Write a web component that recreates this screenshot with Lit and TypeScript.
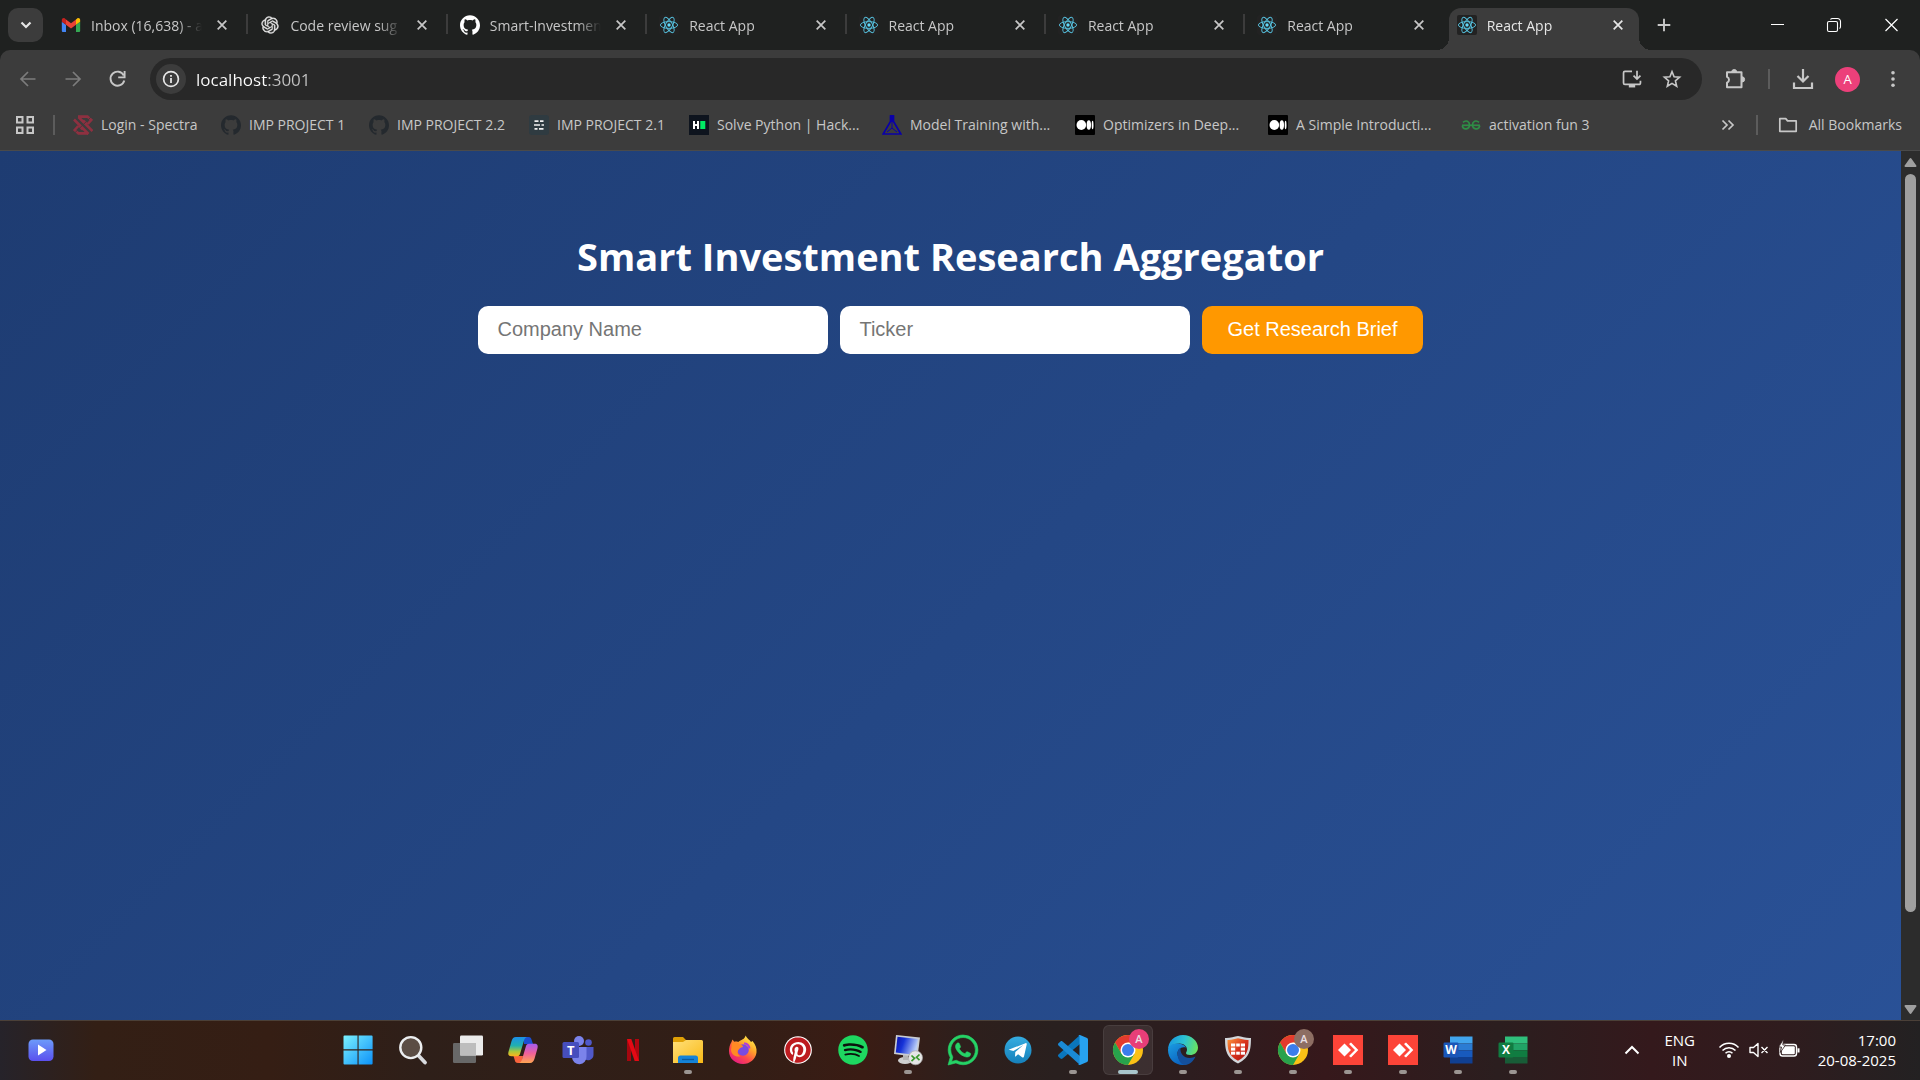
import { LitElement, html, css, TemplateResult } from "lit";
import { customElement, state } from "lit/decorators.js";
import { classMap } from "lit/directives/class-map.js";

/* ---------- Favicons ---------- */

const OCTOCAT =
  "M12 .297c-6.63 0-12 5.373-12 12 0 5.303 3.438 9.8 8.205 11.385.6.113.82-.258.82-.577 0-.285-.01-1.04-.015-2.04-3.338.724-4.042-1.61-4.042-1.61C4.422 18.07 3.633 17.7 3.633 17.7c-1.087-.744.084-.729.084-.729 1.205.084 1.838 1.236 1.838 1.236 1.07 1.835 2.809 1.305 3.495.998.108-.776.417-1.305.76-1.605-2.665-.3-5.466-1.332-5.466-5.93 0-1.31.465-2.38 1.235-3.22-.135-.303-.54-1.523.105-3.176 0 0 1.005-.322 3.3 1.23.96-.267 1.98-.399 3-.405 1.02.006 2.04.138 3 .405 2.28-1.552 3.285-1.23 3.285-1.23.645 1.653.24 2.873.12 3.176.765.84 1.23 1.91 1.23 3.22 0 4.61-2.805 5.625-5.475 5.92.42.36.81 1.096.81 2.22 0 1.606-.015 2.896-.015 3.286 0 .315.21.69.825.57C20.565 22.092 24 17.592 24 12.297c0-6.627-5.373-12-12-12";

const gmailIcon = () => html`<svg viewBox="48 27 96 96" aria-hidden="true">
  <path fill="#4285f4" d="M58 108h14V74L52 59v43c0 3.32 2.69 6 6 6" />
  <path fill="#34a853" d="M120 108h14c3.32 0 6-2.69 6-6V59l-20 15" />
  <path fill="#fbbc04" d="M120 48v26l20-15v-8c0-7.42-8.47-11.65-14.4-7.2" />
  <path fill="#ea4335" d="M72 74V48l24 18 24-18v26L96 92" />
  <path fill="#c5221f" d="M52 51v8l20 15V48l-5.6-4.2c-5.94-4.45-14.4-.22-14.4 7.2" />
</svg>`;

const openaiIcon = () => html`<svg viewBox="-2 -2 28 28" aria-hidden="true">
  <path
    fill="#e6e6e6"
    stroke="#e6e6e6"
    stroke-width=".5"
    d="M22.2819 9.8211a5.9847 5.9847 0 0 0-.5157-4.9108 6.0462 6.0462 0 0 0-6.5098-2.9A6.0651 6.0651 0 0 0 4.9807 4.1818a5.9847 5.9847 0 0 0-3.9977 2.9 6.0462 6.0462 0 0 0 .7427 7.0966 5.98 5.98 0 0 0 .511 4.9107 6.051 6.051 0 0 0 6.5146 2.9001A5.9847 5.9847 0 0 0 13.2599 24a6.0557 6.0557 0 0 0 5.7718-4.2058 5.9894 5.9894 0 0 0 3.9977-2.9001 6.0557 6.0557 0 0 0-.7475-7.0729zm-9.022 12.6081a4.4755 4.4755 0 0 1-2.8764-1.0408l.1419-.0804 4.7783-2.7582a.7948.7948 0 0 0 .3927-.6813v-6.7369l2.02 1.1686a.071.071 0 0 1 .038.052v5.5826a4.504 4.504 0 0 1-4.4945 4.4944zm-9.6607-4.1254a4.4708 4.4708 0 0 1-.5346-3.0137l.142.0852 4.783 2.7582a.7712.7712 0 0 0 .7806 0l5.8428-3.3685v2.3324a.0804.0804 0 0 1-.0332.0615L9.74 19.9502a4.4992 4.4992 0 0 1-6.1408-1.6464zM2.3408 7.8956a4.485 4.485 0 0 1 2.3655-1.9728V11.6a.7664.7664 0 0 0 .3879.6765l5.8144 3.3543-2.0201 1.1685a.0757.0757 0 0 1-.071 0l-4.8303-2.7865A4.504 4.504 0 0 1 2.3408 7.872zm16.5963 3.8558L13.1038 8.364 15.1192 7.2a.0757.0757 0 0 1 .071 0l4.8303 2.7913a4.4944 4.4944 0 0 1-.6765 8.1042v-5.6772a.79.79 0 0 0-.407-.667zm2.0107-3.0231l-.142-.0852-4.7735-2.7818a.7759.7759 0 0 0-.7854 0L9.409 9.2297V6.8974a.0662.0662 0 0 1 .0284-.0615l4.8303-2.7866a4.4992 4.4992 0 0 1 6.6802 4.66zM8.3065 12.863l-2.02-1.1638a.0804.0804 0 0 1-.038-.0567V6.0742a4.4992 4.4992 0 0 1 7.3757-3.4537l-.142.0805L8.704 5.459a.7948.7948 0 0 0-.3927.6813zm1.0976-2.3654l2.602-1.4998 2.6069 1.4998v2.9994l-2.5974 1.4997-2.6067-1.4997Z"
  />
</svg>`;

const githubIcon = (fill: string) => html`<svg viewBox="0 0 24 24" aria-hidden="true">
  <path fill=${fill} d=${OCTOCAT} />
</svg>`;

const reactIcon = () => html`<svg viewBox="0 0 20 20" aria-hidden="true">
  <rect width="20" height="20" rx="2" fill="#222222" />
  <circle cx="10" cy="10" r="1.7" fill="#61dafb" />
  <g fill="none" stroke="#56c1de" stroke-width=".95">
    <ellipse cx="10" cy="10" rx="8.6" ry="3.4" />
    <ellipse cx="10" cy="10" rx="8.6" ry="3.4" transform="rotate(60 10 10)" />
    <ellipse cx="10" cy="10" rx="8.6" ry="3.4" transform="rotate(120 10 10)" />
  </g>
</svg>`;

const spectraIcon = () => html`<svg viewBox="0 0 20 20" aria-hidden="true">
  <g fill="none" stroke="#8e3040" stroke-width="2.6">
    <path d="M5 1.600h9.500L18.300 5l-3.600 4" />
    <path d="M1 4.500 15.500 19M5.500 2 19.500 16" />
    <path d="M15 18.400H5.500L1.700 15l3.600-4" />
    <path d="M10 5.500 14 9.500M6 10.500l4 4" />
  </g>
  <path stroke="#3c3c3c" stroke-width=".9" d="M1 18.600 19 1" />
</svg>`;

const sheetIcon = () => html`<svg viewBox="0 0 20 20" aria-hidden="true">
  <rect width="20" height="20" rx="3" fill="#2f3b41" />
  <path stroke="#f0f0f0" stroke-width="1.7" d="M5.5 6.2h4M11 6.2h3.5M5 10h6M12.500 10H15M5.500 13.800h3M10 13.800h4.500" />
</svg>`;

const hackerRankIcon = () => html`<svg viewBox="0 0 20 20" aria-hidden="true">
  <rect width="20" height="20" fill="#0e141e" />
  <path stroke="#fff" stroke-width="2" d="M5 6v8M9 6v8M5 10h4" />
  <rect x="11.300" y="6" width="5" height="8" fill="#00ea64" />
</svg>`;

const flaskIcon = () => html`<svg viewBox="0 0 20 20" aria-hidden="true">
  <path fill="none" stroke="#0a00a8" stroke-width="1.700" d="M8.500 1v5.500L1.200 19h17.600L11.500 6.500V1z" />
  <path fill="#0a00a8" d="M8 0h4v7H8z" />
  <path fill="none" stroke="#0a00a8" stroke-width="1" d="M10 7v6M10 13l-5 4M10 13l5 4" />
</svg>`;

const mediumIcon = () => html`<svg viewBox="0 0 20 20" aria-hidden="true">
  <rect width="20" height="20" rx="1" fill="#000" />
  <ellipse cx="6.300" cy="10" rx="4.800" ry="5" fill="#fff" />
  <ellipse cx="13.800" cy="10" rx="2.200" ry="4.700" fill="#fff" />
  <ellipse cx="17.600" cy="10" rx=".9" ry="4.300" fill="#fff" />
</svg>`;

const geeksIcon = () => html`<svg viewBox="0 0 20 20" aria-hidden="true">
  <g fill="none" stroke="#2f8d46" stroke-width="1.700">
    <path d="M1 10.300h18" />
    <path d="M2 7.300c3-2.600 6.500-1 6.500 2.500 0 5-6.500 5.400-7.200.8" />
    <path d="M18 7.300c-3-2.600-6.500-1-6.500 2.500 0 5 6.500 5.400 7.200.8" />
  </g>
</svg>`;

/* ---------- Browser chrome glyphs ---------- */

const stroke = (d: string, box = "0 0 20 20", width = "2") => html`<svg viewBox=${box} aria-hidden="true">
  <path d=${d} fill="none" stroke="currentColor" stroke-width=${width} />
</svg>`;

const chevronDown = () => stroke("M5.500 7.500 10 12l4.500-4.500", "0 0 20 20", "2.200");
const closeIcon = () => stroke("M5.200 5.200l9.600 9.600M14.800 5.200l-9.600 9.600", "0 0 20 20", "1.900");
const plusIcon = () => stroke("M10 3.700v12.600M3.700 10h12.600", "0 0 20 20", "1.900");
const backIcon = () => stroke("M17.500 10H3.500M10 3 3 10l7 7", "0 0 20 20", "1.700");
const forwardIcon = () => stroke("M2.500 10h14M10 3l7 7-7 7", "0 0 20 20", "1.700");
const reloadIcon = () => html`<svg viewBox="0 0 20 20" aria-hidden="true">
  <path d="M15.800 6.500A7 7 0 1 0 16.300 11.500" fill="none" stroke="currentColor" stroke-width="1.900" />
  <path d="M16.600 2v6.400h-6.400" fill="none" stroke="currentColor" stroke-width="1.900" />
</svg>`;
const infoIcon = () => html`<svg viewBox="0 0 20 20" aria-hidden="true">
  <circle cx="10" cy="10" r="7.400" fill="none" stroke="currentColor" stroke-width="1.700" />
  <path d="M10 9v5M10 6v1.800" stroke="currentColor" stroke-width="1.800" />
</svg>`;
const installIcon = () => html`<svg viewBox="0 0 22 22" aria-hidden="true">
  <path d="M11 2.500H3.200a1.500 1.500 0 0 0-1.500 1.500v11.500A1.500 1.500 0 0 0 3.200 17h15.600a1.500 1.500 0 0 0 1.500-1.500V13" fill="none" stroke="currentColor" stroke-width="1.900" />
  <path d="M7.500 17h7v3.300h-7z" fill="currentColor" />
  <path d="M16.500 2v9M12.700 7.200l3.800 3.900 3.800-3.900" fill="none" stroke="currentColor" stroke-width="1.900" />
</svg>`;
const starIcon = () =>
  stroke("M10 2.600l2.100 5.200 5.500.4-4.200 3.600 1.300 5.500L10 14.400l-4.700 2.900 1.300-5.500-4.200-3.600 5.500-.4z", "0 0 20 20", "1.600");
const puzzleIcon = () => html`<svg viewBox="0 0 22 22" aria-hidden="true">
  <path d="M3 4.300h14.500v15H3v-4.600a3.100 3.100 0 0 0 0-5.800z" fill="none" stroke="currentColor" stroke-width="2" stroke-linejoin="round" />
  <path d="M7.700 4a2.500 2.500 0 0 1 5 0zM18 8.800a2.600 2.600 0 0 1 0 5.200z" fill="currentColor" stroke="currentColor" />
</svg>`;
const downloadIcon = () => stroke("M11 1v12M5.500 8l5.500 5.500L16.500 8M2 14.500V20h18v-5.500", "0 0 22 22", "2.200");
const dotsIcon = () => html`<svg viewBox="0 0 20 20" aria-hidden="true">
  <g fill="currentColor"><circle cx="10" cy="3" r="2" /><circle cx="10" cy="10" r="2" /><circle cx="10" cy="17" r="2" /></g>
</svg>`;
const appsIcon = () => html`<svg viewBox="0 0 18 18" aria-hidden="true">
  <path d="M1 1h5.500v5.500H1zM11.500 1H17v5.500h-5.500zM1 11.500h5.500V17H1zM11.500 11.500H17V17h-5.500z" fill="none" stroke="currentColor" stroke-width="2" />
</svg>`;
const overflowIcon = () => stroke("M4.500 5.500 9 10l-4.500 4.500M10.500 5.500 15 10l-4.500 4.500", "0 0 20 20", "1.700");
const folderIcon = () => html`<svg viewBox="0 0 22 20" aria-hidden="true">
  <path d="M2 3h6.500l2 2.500H20V17H2z" fill="none" stroke="currentColor" stroke-width="1.900" stroke-linejoin="round" />
</svg>`;
const minimizeIcon = () => stroke("M3 9.500h13", "0 0 20 20", "1");
const restoreIcon = () => html`<svg viewBox="0 0 20 20" aria-hidden="true">
  <g fill="none" stroke="currentColor" stroke-width="1.100">
    <rect x="2.500" y="6.500" width="10" height="10" rx="1.500" />
    <path d="M5.500 4.500c.4-.7 1-1 2-1h5a3 3 0 0 1 3 3v5c0 1-.3 1.600-1 2" />
  </g>
</svg>`;
const windowCloseIcon = () => stroke("M3.500 4l12 12M15.500 4l-12 12", "0 0 20 20", "1.200");

/* ---------- Taskbar icons ---------- */

const startIcon = () => html`<svg viewBox="0 0 32 32" aria-hidden="true">
  <defs>
    <linearGradient id="start" x1="1" y1="1" x2="31" y2="31" gradientUnits="userSpaceOnUse">
      <stop offset="0" stop-color="#7df3ff" /><stop offset="1" stop-color="#0a90f8" />
    </linearGradient>
  </defs>
  <path fill="url(#start)" d="M1.500 2.500a1 1 0 0 1 1-1h13v13.800h-14zM16.600 1.500h13a1 1 0 0 1 1 1v12.800h-14zM1.500 16.500h14v14h-13a1 1 0 0 1-1-1zM16.600 16.500h14v13a1 1 0 0 1-1 1h-13z" />
</svg>`;

const searchIcon = () => html`<svg viewBox="0 0 32 32" aria-hidden="true">
  <path d="M20.500 20.500 28 28.500" stroke="#d8dade" stroke-width="3.800" stroke-linecap="round" />
  <circle cx="13.800" cy="13.600" r="10.500" fill="#5b4d45" stroke="#eceef0" stroke-width="2.400" />
</svg>`;

const taskViewIcon = () => html`<svg viewBox="0 0 32 32" aria-hidden="true">
  <rect x="1" y="9" width="23" height="20" rx="1.200" fill="#686868" />
  <rect x="8" y="1.500" width="23" height="20" rx="1.200" fill="#ebebeb" />
  <path d="M8 9h16v12.500H8z" fill="#bdbdbd" />
</svg>`;

const copilotIcon = () => html`<svg viewBox="0 0 32 32" aria-hidden="true">
  <defs>
    <linearGradient id="copilotA" x1="0" y1="0" x2="0" y2="1">
      <stop offset="0" stop-color="#1c8fe8" /><stop offset=".45" stop-color="#20b0b0" />
      <stop offset=".75" stop-color="#a9c93c" /><stop offset="1" stop-color="#ffb31a" />
    </linearGradient>
    <linearGradient id="copilotB" x1="0" y1="0" x2="0" y2="1">
      <stop offset="0" stop-color="#a45cf0" /><stop offset=".5" stop-color="#f0609a" /><stop offset="1" stop-color="#ffa552" />
    </linearGradient>
  </defs>
  <path d="M17 3h4.500c2 0 2.600 1 3 2.600L26 10h-9z" fill="#1b4fd0" />
  <path d="M15 29h-4c-2.200 0-2.700-1-3.200-2.700L6.500 22H16z" fill="#f7633c" />
  <path d="M9 3h11c-1.600.4-2.500 1.600-3 3.500L13 20c-.5 1.600-1.600 2.300-3 2.300H4.500c-3 0-3.700-1.800-3-4.500l3-10.600C5.300 4.500 6.500 3 9 3z" fill="url(#copilotA)" />
  <path d="M23 29H12c1.600-.4 2.500-1.600 3-3.500L19 12c.5-1.600 1.600-2.300 3-2.300h5.500c3 0 3.700 1.800 3 4.500l-3 10.600C26.700 27.500 25.500 29 23 29z" fill="url(#copilotB)" />
</svg>`;

const teamsIcon = () => html`<svg viewBox="0 0 32 32" aria-hidden="true">
  <circle cx="26.500" cy="8.500" r="3.300" fill="#5059c9" />
  <path d="M22 13h9.500v8a5.500 5.500 0 0 1-9.500 3.500z" fill="#5059c9" />
  <circle cx="17" cy="7" r="5" fill="#7b83eb" />
  <path d="M10 13h14.500v9.500a7.200 7.200 0 0 1-14.500 1z" fill="#7b83eb" />
  <rect x=".5" y="8" width="16.500" height="16" rx="1.500" fill="#464ebd" />
  <text x="8.800" y="20.600" text-anchor="middle" font-size="13" font-weight="700" fill="#fff">T</text>
</svg>`;

const netflixIcon = () => html`<svg viewBox="0 0 32 32" aria-hidden="true">
  <rect x="10" y="5" width="4" height="22" fill="#a5070f" />
  <rect x="18" y="5" width="4" height="22" fill="#b00610" />
  <path d="M10 5h4.300L22 27h-4.300z" fill="#e50914" />
</svg>`;

const explorerIcon = () => html`<svg viewBox="0 0 32 32" aria-hidden="true">
  <defs>
    <linearGradient id="folder" x1="0" y1="0" x2="1" y2="1">
      <stop offset="0" stop-color="#ffe07a" /><stop offset="1" stop-color="#f9b916" />
    </linearGradient>
  </defs>
  <path d="M1 4.500A1.500 1.500 0 0 1 2.500 3H11l3 3v6H1z" fill="#dfa006" />
  <path d="M1 8h10l3-2h15.500A1.500 1.500 0 0 1 31 7.500V29H1z" fill="url(#folder)" />
  <path d="M6 29v-5a2.500 2.500 0 0 1 2.500-2.500h15A2.500 2.500 0 0 1 26 24v5z" fill="#1583d8" />
  <path d="M10 25.500h12" stroke="#0b5a9e" stroke-width="1.300" />
</svg>`;

const firefoxIcon = () => html`<svg viewBox="0 0 32 32" aria-hidden="true">
  <defs>
    <linearGradient id="fox" x1=".85" y1=".05" x2=".2" y2="1">
      <stop offset="0" stop-color="#fff44f" /><stop offset=".35" stop-color="#ffa32a" />
      <stop offset=".65" stop-color="#ff4a4a" /><stop offset="1" stop-color="#e0168a" />
    </linearGradient>
  </defs>
  <path d="M18.500 1.500c1.500 3 4.500 4.500 5.500 6.500l1.500-1c3 3.500 4.500 7 4 11.500-.8 6.600-6.500 11.500-13.500 11.500C8.300 30 2 24.500 2 17c0-3 .8-6.500 2.500-9l1-2.500 1.700 2.300c1.300-.4 2.600-.3 4 .2C14 5.500 18 5.500 18.500 1.500z" fill="url(#fox)" />
  <circle cx="16" cy="16" r="5.800" fill="#7a4be0" />
  <path d="M5 9c3-1 6-.5 7.500 1.500 2 .4 3.500 1 3.500 2.500-3 .5-3.500 1.500-5 3.500-1 2.500 0 4.500 2.500 5.800-5 1.200-9-1.500-9.500-6.300z" fill="#ff8a24" />
  <path d="M17 9.500c3 0 5 2 5.500 5" stroke="#b13ae0" stroke-width="2" fill="none" />
</svg>`;

const pinterestIcon = () => html`<svg viewBox="-3 -3 30 30" aria-hidden="true">
  <circle cx="12" cy="12" r="13" fill="#fff" />
  <path
    fill="#bd1c20"
    d="M12.017 0C5.396 0 .029 5.367.029 11.987c0 5.079 3.158 9.417 7.618 11.162-.105-.949-.199-2.403.041-3.439.219-.937 1.406-5.957 1.406-5.957s-.359-.72-.359-1.781c0-1.663.967-2.911 2.168-2.911 1.024 0 1.518.769 1.518 1.688 0 1.029-.653 2.567-.992 3.992-.285 1.193.6 2.165 1.775 2.165 2.128 0 3.768-2.245 3.768-5.487 0-2.861-2.063-4.869-5.008-4.869-3.41 0-5.409 2.562-5.409 5.199 0 1.033.394 2.143.889 2.741.099.12.112.225.085.345-.09.375-.293 1.199-.334 1.363-.053.225-.172.271-.401.165-1.495-.69-2.433-2.878-2.433-4.646 0-3.776 2.748-7.252 7.92-7.252 4.158 0 7.392 2.967 7.392 6.923 0 4.135-2.607 7.462-6.233 7.462-1.214 0-2.354-.629-2.758-1.379l-.749 2.848c-.269 1.045-1.004 2.352-1.498 3.146 1.123.345 2.306.535 3.55.535 6.607 0 11.985-5.365 11.985-11.987C23.97 5.39 18.592.026 11.985.026z"
  />
</svg>`;

const spotifyIcon = () => html`<svg viewBox="-1 -1 26 26" aria-hidden="true">
  <circle cx="12" cy="12" r="11.500" fill="#0b120d" />
  <path
    fill="#1ed760"
    d="M12 0C5.4 0 0 5.4 0 12s5.400 12 12 12 12-5.400 12-12S18.660 0 12 0zm5.521 17.340c-.24.359-.66.48-1.021.24-2.820-1.740-6.360-2.101-10.561-1.141-.418.122-.779-.179-.899-.539-.12-.421.18-.78.54-.9 4.560-1.021 8.520-.6 11.640 1.320.42.18.479.659.301 1.020zm1.440-3.300c-.301.42-.841.6-1.262.3-3.239-1.980-8.159-2.580-11.939-1.380-.479.12-1.020-.12-1.140-.6-.12-.48.12-1.021.6-1.141C9.600 9.900 15 10.561 18.720 12.840c.361.181.54.78.241 1.200zm.12-3.360C15.240 8.400 8.820 8.160 5.160 9.301c-.6.179-1.200-.181-1.380-.721-.18-.601.18-1.200.72-1.381 4.260-1.260 11.280-1.020 15.721 1.621.539.3.719 1.020.419 1.560-.299.421-1.020.599-1.559.3z"
  />
</svg>`;

const remoteDesktopIcon = () => html`<svg viewBox="0 0 32 32" aria-hidden="true">
  <defs>
    <linearGradient id="screen" x1="0" y1="0" x2="1" y2=".3">
      <stop offset="0" stop-color="#0a10a8" /><stop offset=".4" stop-color="#1633d8" /><stop offset="1" stop-color="#b9cdf8" />
    </linearGradient>
  </defs>
  <ellipse cx="13" cy="26.500" rx="7" ry="3.500" fill="#cfcfcf" />
  <path d="M11 20h5v6h-5z" fill="#b5b5b5" />
  <path d="M4 1 28 3.500 25.500 23 2 20z" fill="#c9ccd2" />
  <path d="M5.500 2.800 26 4.900 24 21 3.800 18.500z" fill="url(#screen)" />
  <circle cx="23.500" cy="23.800" r="7" fill="#e6e6e6" stroke="#a8a8a8" stroke-width=".7" />
  <path d="M19.500 21.500l3 2.800-3 2.800M27.500 20.500l-3 2.800 3 2.800" fill="none" stroke="#3a9a2c" stroke-width="1.700" />
</svg>`;

const whatsappIcon = () => html`<svg viewBox="-.8 -.8 25.600 25.600" aria-hidden="true">
  <path
    fill="#25d366"
    stroke="#25d366"
    stroke-width=".5"
    d="M17.472 14.382c-.297-.149-1.758-.867-2.030-.967-.273-.099-.471-.148-.67.15-.197.297-.767.966-.94 1.164-.173.199-.347.223-.644.075-.297-.15-1.255-.463-2.390-1.475-.883-.788-1.480-1.761-1.653-2.059-.173-.297-.018-.458.13-.606.134-.133.298-.347.446-.52.149-.174.198-.298.298-.497.099-.198.05-.371-.025-.52-.075-.149-.669-1.612-.916-2.207-.242-.579-.487-.5-.669-.51-.173-.008-.371-.01-.57-.01-.198 0-.52.074-.792.372-.272.297-1.040 1.016-1.040 2.479 0 1.462 1.065 2.875 1.213 3.074.149.198 2.096 3.200 5.077 4.487.709.306 1.262.489 1.694.625.712.227 1.360.195 1.871.118.571-.085 1.758-.719 2.006-1.413.248-.694.248-1.289.173-1.413-.074-.124-.272-.198-.57-.347m-5.421 7.403h-.004a9.870 9.870 0 01-5.031-1.378l-.361-.214-3.741.982.998-3.648-.235-.374a9.860 9.860 0 01-1.510-5.260c.001-5.450 4.436-9.884 9.888-9.884 2.640 0 5.122 1.030 6.988 2.898a9.825 9.825 0 012.893 6.994c-.003 5.450-4.437 9.884-9.885 9.884m8.413-18.297A11.815 11.815 0 0012.050 0C5.495 0 .16 5.335.157 11.892c0 2.096.547 4.142 1.588 5.945L.057 24l6.305-1.654a11.882 11.882 0 005.683 1.448h.005c6.554 0 11.890-5.335 11.893-11.893a11.821 11.821 0 00-3.480-8.413Z"
  />
</svg>`;

const telegramIcon = () => html`<svg viewBox="0 0 32 32" aria-hidden="true">
  <defs>
    <linearGradient id="telegram" x1="0" y1="0" x2="0" y2="1">
      <stop offset="0" stop-color="#35ade1" /><stop offset="1" stop-color="#1680ba" />
    </linearGradient>
  </defs>
  <circle cx="16" cy="16" r="13.500" fill="url(#telegram)" />
  <path d="M6.500 15.800 23.500 9.200c.8-.3 1.500.2 1.200 1.300L22 22.600c-.2 1-.8 1.200-1.600.8l-4.300-3.200-2.200 2c-.3.300-.5.4-.9.4l.3-4.500 8-7.200-9.900 6.200-4.600-1.300z" fill="#fff" />
</svg>`;

const vscodeIcon = () => html`<svg viewBox="0 0 32 32" aria-hidden="true">
  <path d="M23 1v9L5.500 24.500c-.8.600-1.500.5-2 0l-2-1.800c-.7-.7-.7-1.500 0-2.100z" fill="#0a76bd" />
  <path d="M23 31v-9L5.500 7.500c-.8-.6-1.500-.5-2 0l-2 1.800c-.7.700-.7 1.500 0 2.100z" fill="#1a8ad6" />
  <path d="M23 1l6.500 2.800c.9.400 1.500 1 1.500 2v20.400c0 1-.6 1.600-1.500 2L23 31c-1 .3-1.500 0-2-.5.800.3 1.500 0 1.500-1V2.500c0-1-.7-1.300-1.500-1 .5-.5 1-.8 2-.5z" fill="#27a2f0" />
</svg>`;

const chromeIcon = (badge: string) => html`<svg viewBox="0 0 40 40" aria-hidden="true">
  <circle cx="18" cy="24" r="15" fill="#fbc116" />
  <path d="M5 16.500A15 15 0 0 1 31 16.500L18 16.500 11.500 27.800z" fill="#e33b2e" />
  <path d="M5 16.500A15 15 0 0 0 18 39l6.500-11.200H11.500z" fill="#28a24c" />
  <circle cx="18" cy="24" r="7.500" fill="#fff" />
  <circle cx="18" cy="24" r="6" fill="#3b7ded" />
  <circle cx="29" cy="13" r="10" fill=${badge} />
  <text x="29" y="17" text-anchor="middle" font-size="11" font-weight="600" fill="#e9dfe2">A</text>
</svg>`;

const edgeIcon = () => html`<svg viewBox="0 0 32 32" aria-hidden="true">
  <defs>
    <linearGradient id="edgeTop" x1="0" y1=".4" x2="1" y2=".6">
      <stop offset="0" stop-color="#1a98e0" /><stop offset=".5" stop-color="#2cc3d2" /><stop offset="1" stop-color="#6be35c" />
    </linearGradient>
    <linearGradient id="edgeLow" x1="0" y1="0" x2=".6" y2="1">
      <stop offset="0" stop-color="#1b9de2" /><stop offset="1" stop-color="#0b62c0" />
    </linearGradient>
  </defs>
  <path d="M1 16C1 7.500 7.500 1 16 1s15 6.300 15 12.500c0 5-4 7.500-7.800 7.500-3 0-4.200-1-4.200-2 0-.8 1-1.300 1-3.500 0-3-3-6-7.500-6C6 9.500 1 13 1 16z" fill="url(#edgeTop)" />
  <path d="M1 16c0-4 4.500-7 10.500-6.500 3.500.3 6.500 1.800 7.500 4-5-1.500-8.500 2-8.500 6C10.500 25.500 16 30 20 30.500c-1.500.5-3 .5-4 .5C7.500 31 1 24.500 1 16z" fill="url(#edgeLow)" />
  <path d="M10.500 19.500c0-2.500 1-4.500 3-5.700-.8 5.700 3.500 10.200 9 10.200 2.500 0 4.500-.8 6-1.500C26.500 27 22.500 31 18 31c-4 0-7.500-5.500-7.500-11.500z" fill="#144f9c" />
</svg>`;

const shieldIcon = () => html`<svg viewBox="0 0 32 32" aria-hidden="true">
  <defs>
    <linearGradient id="shield" x1="0" y1="0" x2="1" y2="1">
      <stop offset="0" stop-color="#ff9a3c" /><stop offset=".5" stop-color="#d9331c" /><stop offset="1" stop-color="#a80f10" />
    </linearGradient>
  </defs>
  <path d="M3 4c4 .6 9-1.500 13-2 4 .5 9 2.600 13 2-.2 10 0 19-13 25.500C3 23 3.200 14 3 4z" fill="#d2d6da" />
  <path d="M5.500 6c4 .3 7.500-1.300 10.500-1.700 3 .4 6.500 2 10.500 1.700 0 8.500-.5 15.500-10.500 20.800C6 21.500 5.500 14.500 5.500 6z" fill="url(#shield)" />
  <g fill="#fff">
    <rect x="9" y="9.500" width="4.200" height="3" /><rect x="14.200" y="9.500" width="3.600" height="3" /><rect x="18.800" y="9.500" width="4.200" height="3" />
    <rect x="9" y="13.600" width="4.200" height="3" /><rect x="18.800" y="13.600" width="4.200" height="3" />
    <rect x="9" y="17.700" width="4.200" height="3" /><rect x="14.200" y="17.700" width="3.600" height="3" /><rect x="18.800" y="17.700" width="4.200" height="3" />
  </g>
</svg>`;

const anydeskIcon = () => html`<svg viewBox="0 0 32 32" aria-hidden="true">
  <rect x="1" y="1" width="30" height="30" fill="#fc4438" />
  <path d="M6 16l6.500-6.500L19 16l-6.500 6.500z" fill="#fff" />
  <path d="M17 10l2-1.500 7.300 7.500-7.300 7.500-2-1.500 6-6z" fill="#fff" />
</svg>`;

const officeIcon = (letter: string, shades: string[], tile: string) => html`<svg viewBox="0 0 32 32" aria-hidden="true">
  <rect x="8" y="2.500" width="22.500" height="7" fill=${shades[0]} />
  <rect x="8" y="9.500" width="22.500" height="6.800" fill=${shades[1]} />
  <rect x="8" y="16.300" width="22.500" height="6.700" fill=${shades[2]} />
  <rect x="8" y="23" width="22.500" height="6.500" fill=${shades[3]} />
  <rect x="1.500" y="8.500" width="15" height="15" rx="1.200" fill=${tile} />
  <text x="9" y="20.200" text-anchor="middle" font-size="12" font-weight="700" fill="#fff">${letter}</text>
</svg>`;

const widgetIcon = () => html`<svg viewBox="0 0 32 32" aria-hidden="true">
  <defs>
    <linearGradient id="widget" x1="0" y1="0" x2="0" y2="1">
      <stop offset="0" stop-color="#6c9bfa" /><stop offset="1" stop-color="#5b50ee" />
    </linearGradient>
  </defs>
  <rect x="3.500" y="5.500" width="25" height="21.500" rx="4.500" fill="url(#widget)" />
  <path d="M13 10.500v11l8.500-5.500z" fill="#fff" />
</svg>`;

const trayChevron = () => stroke("M3.500 13.500 10 7l6.500 6.500", "0 0 20 20", "2");
const wifiIcon = () => html`<svg viewBox="0 0 22 22" aria-hidden="true">
  <g fill="none" stroke="#fff" stroke-width="1.500">
    <path d="M1.500 8.500a13 13 0 0 1 19 0M4.500 11.500a9 9 0 0 1 13 0M7.500 14.300a5 5 0 0 1 7 0" />
  </g>
  <circle cx="11" cy="17" r="2" fill="#fff" />
</svg>`;
const muteIcon = () => html`<svg viewBox="0 0 22 22" aria-hidden="true">
  <path d="M2 8.500h3.500L10 4.500v13L5.500 13.500H2zM13.500 8l6 6M19.500 8l-6 6" fill="none" stroke="#fff" stroke-width="1.400" stroke-linejoin="round" />
</svg>`;
const batteryIcon = () => html`<svg viewBox="0 0 22 22" aria-hidden="true">
  <rect x="2" y="5.500" width="16.500" height="11.500" rx="2.500" fill="none" stroke="#fff" stroke-width="1.400" />
  <rect x="3.800" y="7.300" width="13" height="8" rx="1" fill="#fff" />
  <path d="M19.500 9.300h2v4.200h-2z" fill="#fff" />
  <path d="M5.500 0 .8 8h2.700l-1.200 5.500L7.500 6H4.800z" fill="#fff" stroke="#2f1c1d" stroke-width=".8" />
</svg>`;

/* ---------- Data ---------- */

interface Tab {
  title: string;
  icon: () => TemplateResult;
}
interface Bookmark extends Tab {}
interface TaskItem {
  name: string;
  icon: () => TemplateResult;
  running?: boolean;
  active?: boolean;
}

const TABS: Tab[] = [
  { title: "Inbox (16,638) - a", icon: gmailIcon },
  { title: "Code review sug", icon: openaiIcon },
  { title: "Smart-Investmen", icon: () => githubIcon("#ffffff") },
  ...Array.from({ length: 5 }, () => ({ title: "React App", icon: reactIcon })),
];

const BOOKMARKS: Bookmark[] = [
  { title: "Login - Spectra", icon: spectraIcon },
  { title: "IMP PROJECT 1", icon: () => githubIcon("#24292e") },
  { title: "IMP PROJECT 2.2", icon: () => githubIcon("#24292e") },
  { title: "IMP PROJECT 2.1", icon: sheetIcon },
  { title: "Solve Python | Hack...", icon: hackerRankIcon },
  { title: "Model Training with...", icon: flaskIcon },
  { title: "Optimizers in Deep...", icon: mediumIcon },
  { title: "A Simple Introducti...", icon: mediumIcon },
  { title: "activation fun 3", icon: geeksIcon },
];

const TASKS: TaskItem[] = [
  { name: "Start", icon: startIcon },
  { name: "Search", icon: searchIcon },
  { name: "Task view", icon: taskViewIcon },
  { name: "Copilot", icon: copilotIcon },
  { name: "Teams", icon: teamsIcon },
  { name: "Netflix", icon: netflixIcon },
  { name: "File Explorer", icon: explorerIcon, running: true },
  { name: "Firefox", icon: firefoxIcon },
  { name: "Pinterest", icon: pinterestIcon },
  { name: "Spotify", icon: spotifyIcon },
  { name: "Remote Desktop", icon: remoteDesktopIcon, running: true },
  { name: "WhatsApp", icon: whatsappIcon },
  { name: "Telegram", icon: telegramIcon },
  { name: "Visual Studio Code", icon: vscodeIcon, running: true },
  { name: "Chrome", icon: () => chromeIcon("#e83e78"), running: true, active: true },
  { name: "Edge", icon: edgeIcon, running: true },
  { name: "Firewall", icon: shieldIcon, running: true },
  { name: "Chrome, second profile", icon: () => chromeIcon("#8d6e63"), running: true },
  { name: "AnyDesk", icon: anydeskIcon, running: true },
  { name: "AnyDesk session", icon: anydeskIcon, running: true },
  { name: "Word", icon: () => officeIcon("W", ["#41a5ee", "#2b7cd3", "#185abd", "#103f91"], "#1a56b8"), running: true },
  { name: "Excel", icon: () => officeIcon("X", ["#2fbf7c", "#21a366", "#107c41", "#185c37"], "#107c41"), running: true },
];

/* ---------- Tab strip ---------- */

@customElement("tab-strip")
export class TabStrip extends LitElement {
  @state() private active = TABS.length - 1;

  static styles = css`
    :host {
      display: flex;
      height: 50px;
      background: #1f2120;
      color: #c7c7c7;
      font-size: 14px;
    }
    button {
      display: grid;
      place-items: center;
      flex: none;
      padding: 0;
      border: 0;
      background: none;
      color: inherit;
      font: inherit;
    }
    svg {
      display: block;
      width: 20px;
      height: 20px;
      flex: none;
    }
    .tab-search {
      width: 35px;
      height: 34px;
      margin: 8px 6px 0 8px;
      border-radius: 10px;
      background: #3c3c3c;
      color: #e6e6e6;
    }
    .tabs {
      display: flex;
      flex: 0 1 1595px;
      min-width: 0;
    }
    .tab {
      position: relative;
      display: flex;
      align-items: center;
      flex: 1 1 0;
      min-width: 0;
      height: 42px;
      margin: 0 5px 0 4px;
      padding: 0 8px;
      border-radius: 12px 12px 0 0;
    }
    .strip-cell {
      display: flex;
      flex: 1 1 0;
      align-items: flex-end;
      min-width: 0;
      background: linear-gradient(#3c3c3c, #3c3c3c) right 14px / 2px 20px no-repeat;
    }
    .strip-cell.bare {
      background: none;
    }
    .tab-title {
      display: flex;
      align-items: center;
      justify-content: flex-start;
      gap: 10px;
      flex: 1 1 0;
      min-width: 0;
      height: 34px;
      margin-bottom: 8px;
    }
    .tab-title span {
      flex: 1 1 0;
      padding-top: 2px;
      overflow: hidden;
      white-space: nowrap;
      text-align: left;
      line-height: 20px;
      mask-image: linear-gradient(to right, #000 calc(100% - 24px), transparent);
    }
    .tab-close {
      width: 20px;
      height: 34px;
      margin: 0 3px 8px 10px;
    }
    .tab-close svg {
      width: 18px;
      height: 18px;
    }
    .tab.selected {
      background: #3c3c3c;
      color: #e6e6e6;
    }
    .tab.selected::before,
    .tab.selected::after {
      content: "";
      position: absolute;
      bottom: 0;
      width: 12px;
      height: 12px;
    }
    .tab.selected::before {
      right: 100%;
      background: radial-gradient(circle at 0 0, transparent 12px, #3c3c3c 12px);
    }
    .tab.selected::after {
      left: 100%;
      background: radial-gradient(circle at 100% 0, transparent 12px, #3c3c3c 12px);
    }
    .new-tab {
      width: 40px;
    }
    .window-controls {
      display: flex;
      margin-left: auto;
      color: #fff;
    }
    .window-controls button {
      width: 57px;
    }
  `;

  render() {
    return html`
      <button class="tab-search" aria-label="Search tabs">${chevronDown()}</button>
      <div class="tabs">
        ${TABS.map(
          (tab, i) => html`<div
            class=${classMap({ "strip-cell": true, bare: i === this.active || i === this.active - 1 })}
          >
            <div class=${classMap({ tab: true, selected: i === this.active })}>
              <button class="tab-title" @click=${() => (this.active = i)}>${tab.icon()}<span>${tab.title}</span></button>
              <button class="tab-close" aria-label="Close tab">${closeIcon()}</button>
            </div>
          </div>`
        )}
      </div>
      <button class="new-tab" aria-label="New tab">${plusIcon()}</button>
      <div class="window-controls">
        <button aria-label="Minimize">${minimizeIcon()}</button>
        <button aria-label="Restore">${restoreIcon()}</button>
        <button aria-label="Close">${windowCloseIcon()}</button>
      </div>
    `;
  }
}

/* ---------- Address bar and bookmarks ---------- */

@customElement("browser-toolbar")
export class BrowserToolbar extends LitElement {
  static styles = css`
    :host {
      display: block;
      background: #1f2120;
      color: #c7c7c7;
    }
    .surface {
      background: #3c3c3c;
      border-radius: 10px 10px 0 0;
      border-bottom: 1px solid #4a4a4a;
    }
    button {
      display: grid;
      place-items: center;
      flex: none;
      padding: 0;
      border: 0;
      background: none;
      color: inherit;
      font: inherit;
    }
    svg {
      display: block;
      width: 20px;
      height: 20px;
      flex: none;
    }
    .toolbar {
      display: flex;
      align-items: center;
      height: 42px;
      padding: 8px 5px 0;
    }
    .nav {
      display: flex;
      width: 145px;
    }
    .nav button {
      width: 45px;
      height: 36px;
    }
    .nav button:disabled {
      color: #7c7c7c;
    }
    .address {
      display: flex;
      align-items: center;
      flex: 1;
      height: 42px;
      padding: 0 10px 0 6px;
      border-radius: 21px;
      background: #282828;
    }
    .site-info {
      width: 30px;
      height: 30px;
      border-radius: 15px;
      background: #3c3c3c;
      color: #e6e6e6;
    }
    .address input {
      flex: 1;
      min-width: 0;
      height: 30px;
      margin-left: 10px;
      padding: 0;
      border: 0;
      outline: 0;
      font: inherit;
      font-size: 17px;
      color: transparent;
      background: linear-gradient(to right, #ffffff 71px, #c4c4c4 71px);
      background-clip: text;
    }
    .address .action {
      width: 40px;
      height: 36px;
    }
    .actions {
      display: flex;
      align-items: center;
      height: 42px;
    }
    .actions svg {
      width: 22px;
      height: 22px;
    }
    .actions button {
      width: 45px;
      height: 36px;
    }
    .actions .extensions {
      width: 66px;
    }
    .actions .downloads {
      margin-left: 10px;
    }
    .divider {
      flex: none;
      width: 2px;
      height: 20px;
      background: #5c5c5c;
    }
    .avatar {
      display: grid;
      place-items: center;
      width: 25px;
      height: 25px;
      border-radius: 50%;
      background: #ec407a;
      color: #fff;
      font-size: 13px;
    }
    .actions .more svg {
      width: 18px;
      height: 18px;
    }
    .bookmarks {
      display: flex;
      align-items: center;
      height: 50px;
      padding: 0 18px 0 16px;
      font-size: 14px;
    }
    .bookmarks .apps svg {
      width: 18px;
      height: 18px;
    }
    .bookmarks .apps {
      margin-right: 19px;
    }
    .list {
      display: grid;
      grid-template-columns: repeat(2, 148px) repeat(2, 160px) repeat(5, 193px);
      flex: 1 1 0;
      min-width: 0;
      overflow: hidden;
      margin-left: 18px;
    }
    .list a,
    .folder {
      display: flex;
      align-items: center;
      gap: 8px;
      color: inherit;
      text-decoration: none;
      white-space: nowrap;
      line-height: 20px;
    }
    .overflow {
      width: 40px;
      height: 36px;
      margin-right: 8px;
    }
    .folder {
      margin-left: 20px;
      gap: 11px;
    }
  `;

  render() {
    return html`
      <div class="surface">
        <div class="toolbar">
          <div class="nav">
            <button aria-label="Back" disabled>${backIcon()}</button>
            <button aria-label="Forward" disabled>${forwardIcon()}</button>
            <button aria-label="Reload">${reloadIcon()}</button>
          </div>
          <div class="address">
            <button class="site-info" aria-label="Site information">${infoIcon()}</button>
            <input type="text" aria-label="Address" spellcheck="false" .value=${"localhost:3001"} />
            <button class="action" aria-label="Install app">${installIcon()}</button>
            <button class="action" aria-label="Bookmark this page">${starIcon()}</button>
          </div>
          <div class="actions">
            <button class="extensions" aria-label="Extensions">${puzzleIcon()}</button>
            <span class="divider"></span>
            <button class="downloads" aria-label="Downloads">${downloadIcon()}</button>
            <button class="profile" aria-label="Profile"><span class="avatar">A</span></button>
            <button class="more" aria-label="Menu">${dotsIcon()}</button>
          </div>
        </div>
        <nav class="bookmarks" aria-label="Bookmarks">
          <button class="apps" aria-label="Apps">${appsIcon()}</button>
          <span class="divider"></span>
          <div class="list">${BOOKMARKS.map((b) => html`<a href="#">${b.icon()}${b.title}</a>`)}</div>
          <button class="overflow" aria-label="More bookmarks">${overflowIcon()}</button>
          <span class="divider"></span>
          <button class="folder">${folderIcon()}All Bookmarks</button>
        </nav>
      </div>
    `;
  }
}

/* ---------- Web page ---------- */

@customElement("research-page")
export class ResearchPage extends LitElement {
  static styles = css`
    :host {
      display: flex;
    }
    main {
      display: flex;
      flex-direction: column;
      align-items: center;
      flex: 1;
      min-width: 0;
      padding-top: 79px;
      background: linear-gradient(135deg, #1e3c72, #2a5298 104%);
    }
    h1 {
      margin: 0 0 23px;
      color: #fff;
      font-size: 38px;
      font-weight: 700;
      line-height: 53px;
    }
    form {
      display: flex;
      flex-wrap: wrap;
      justify-content: center;
      gap: 12px;
    }
    input,
    .submit {
      box-sizing: border-box;
      height: 48px;
      border: 0;
      border-radius: 10px;
      font-family: "Liberation Sans", Arial, sans-serif;
      font-size: 20px;
    }
    input {
      width: 350px;
      padding: 0 19px 2px;
      background: #fff;
      color: #222;
    }
    input::placeholder {
      color: #757575;
    }
    .submit {
      padding: 0 25px 2px;
      background: #ff9800;
      color: #fff;
    }
    .scrollbar {
      display: flex;
      flex-direction: column;
      align-items: center;
      flex: none;
      width: 19px;
      background: #2c2c2c;
    }
    .track {
      flex: 1;
      width: 11px;
    }
    .thumb {
      height: calc(90% - 3px);
      border-radius: 6px;
      background: #9f9f9f;
    }
    .arrow {
      display: block;
      width: 19px;
      height: 23px;
    }
  `;

  render() {
    return html`
      <main>
        <h1>Smart Investment Research Aggregator</h1>
        <form @submit=${(e: Event) => e.preventDefault()}>
          <input type="text" aria-label="Company Name" placeholder="Company Name" />
          <input type="text" aria-label="Ticker" placeholder="Ticker" />
          <button class="submit">Get Research Brief</button>
        </form>
      </main>
      <div class="scrollbar" aria-hidden="true">
        <svg class="arrow" viewBox="0 0 19 23"><path d="M9.500 8 14.500 15h-10z" fill="#9f9f9f" stroke="#9f9f9f" stroke-width="2" stroke-linejoin="round" /></svg>
        <div class="track"><div class="thumb"></div></div>
        <svg class="arrow" viewBox="0 0 19 23"><path d="M9.500 16 14.500 9h-10z" fill="#9f9f9f" stroke="#9f9f9f" stroke-width="2" stroke-linejoin="round" /></svg>
      </div>
    `;
  }
}

/* ---------- Taskbar ---------- */

@customElement("task-bar")
export class TaskBar extends LitElement {
  static styles = css`
    :host {
      display: flex;
      align-items: center;
      height: 57px;
      padding: 0 24px 2px 25px;
      border-top: 1px solid #4b4038;
      background: linear-gradient(
        to right,
        #26232a 0%,
        #331f15 5%,
        #351e14 14%,
        #2e1f19 22%,
        #321e16 38%,
        #3a1c14 45%,
        #2e1f1c 50%,
        #29201f 55%,
        #2d1d1f 62%,
        #36181b 69%,
        #2b1e1f 78%,
        #34191c 86%,
        #2f1c1e 93%,
        #232122 100%
      );
      color: #fff;
      font-size: 15px;
    }
    button {
      display: flex;
      align-items: center;
      justify-content: center;
      padding: 0;
      border: 0;
      background: none;
      color: inherit;
      font: inherit;
    }
    svg {
      display: block;
      width: 32px;
      height: 32px;
      flex: none;
    }
    .left {
      flex: 1 1 0;
    }
    .apps {
      display: flex;
      flex: none;
      gap: 5px;
    }
    .app {
      position: relative;
      width: 50px;
      height: 50px;
      border-radius: 6px;
    }
    .app.chrome svg {
      width: 40px;
      height: 40px;
      margin: -8px -4px 0 0;
    }
    .app.active {
      background: #ffffff14;
      box-shadow: inset 0 0 0 1px #ffffff12;
    }
    .app.running::after {
      content: "";
      position: absolute;
      left: 50%;
      bottom: 1px;
      width: 8px;
      height: 4px;
      margin-left: -4px;
      border-radius: 2px;
      background: #9b9592;
    }
    .app.active::after {
      width: 20px;
      margin-left: -10px;
      background: #a9c6cc;
    }
    .tray {
      display: flex;
      align-items: center;
      justify-content: flex-end;
      flex: 1 1 50px;
    }
    .tray button {
      line-height: 20px;
    }
    .tray .chevron svg {
      width: 20px;
      height: 20px;
    }
    .lines {
      display: flex;
      flex-direction: column;
    }
    .tray .language {
      width: 76px;
    }
    .language .lines {
      align-items: center;
    }
    .tray .status {
      gap: 8px;
      margin-right: 18px;
    }
    .status svg {
      width: 22px;
      height: 22px;
    }
    .clock .lines {
      align-items: flex-end;
    }
  `;

  render() {
    return html`
      <div class="left"><button aria-label="Widgets">${widgetIcon()}</button></div>
      <div class="apps">
        ${TASKS.map(
          (t) => html`<button
            class=${classMap({
              app: true,
              running: !!t.running,
              active: !!t.active,
              chrome: t.name.startsWith("Chrome"),
            })}
            aria-label=${t.name}
          >
            ${t.icon()}
          </button>`
        )}
      </div>
      <div class="tray">
        <button class="chevron" aria-label="Show hidden icons">${trayChevron()}</button>
        <button class="language"><span class="lines"><span>ENG</span><span>IN</span></span></button>
        <button class="status" aria-label="Network, volume, battery">${wifiIcon()}${muteIcon()}${batteryIcon()}</button>
        <button class="clock"><span class="lines"><span>17:00</span><span>20-08-2025</span></span></button>
      </div>
    `;
  }
}

@customElement("app-root")
export class AppRoot extends LitElement {
  static styles = css`
    :host {
      display: flex;
      flex-direction: column;
      min-height: 100vh;
      font-family: "Segoe UI", "Open Sans", "Noto Sans", sans-serif;
    }
    research-page {
      flex: 1;
    }
  `;

  render() {
    return html`
      <tab-strip></tab-strip>
      <browser-toolbar></browser-toolbar>
      <research-page></research-page>
      <task-bar></task-bar>
    `;
  }
}
